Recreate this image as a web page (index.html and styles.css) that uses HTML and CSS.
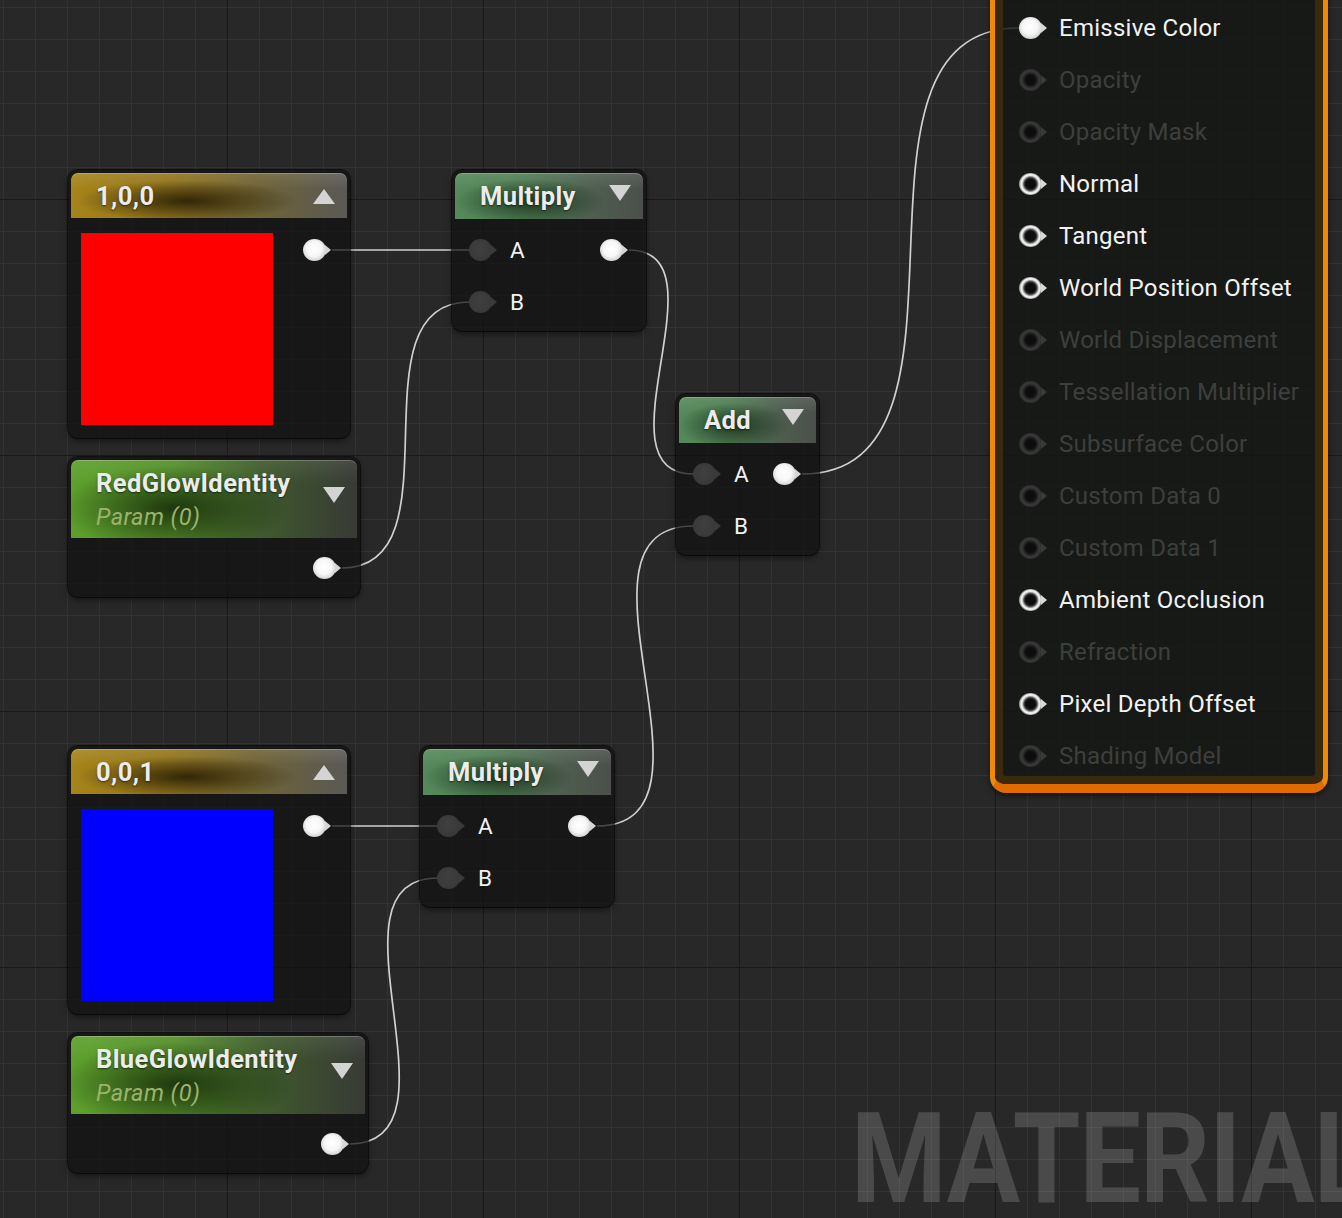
FILE: index.html
```html
<!DOCTYPE html>
<html lang="en">
<head>
<meta charset="utf-8">
<title>Material Graph</title>
<link rel="stylesheet" href="styles.css">
</head>
<body>
<div class="graph">
  <div class="watermark">MATERIAL</div>

  <svg class="wires" width="1342" height="1218" viewBox="0 0 1342 1218">
    <path d="M332 250 H469"/>
    <path d="M342 568 C462 568 349 302 469 302"/>
    <path d="M629 250 C729 250 593 474 693 474"/>
    <path d="M802 474 C1002 474 819 28 1019 28"/>
    <path d="M332 826 H437"/>
    <path d="M597 826 C737 826 553 526 693 526"/>
    <path d="M350 1144 C470 1144 317 878 437 878"/>
  </svg>

  <div class="node const n-red">
    <div class="hdr hdr-const"><span class="title">1,0,0</span><span class="tri up"></span></div>
    <div class="const-body"><div class="swatch swatch-red"></div><span class="pin out"></span></div>
  </div>

  <div class="node param n-redparam">
    <div class="hdr hdr-param">
      <div class="titles"><div class="title">RedGlowIdentity</div><div class="sub">Param (0)</div></div>
      <span class="tri down"></span>
    </div>
    <div class="param-body"><span class="pin out"></span></div>
  </div>

  <div class="node math n-mul1">
    <div class="hdr hdr-math"><span class="title">Multiply</span><span class="tri down"></span></div>
    <div class="math-body">
      <div class="row"><span class="pin in"></span><span class="lbl">A</span><span class="pin out"></span></div>
      <div class="row"><span class="pin in"></span><span class="lbl">B</span></div>
    </div>
  </div>

  <div class="node math n-add">
    <div class="hdr hdr-math"><span class="title">Add</span><span class="tri down"></span></div>
    <div class="math-body">
      <div class="row"><span class="pin in"></span><span class="lbl">A</span><span class="pin out"></span></div>
      <div class="row"><span class="pin in"></span><span class="lbl">B</span></div>
    </div>
  </div>

  <div class="node const n-blue">
    <div class="hdr hdr-const"><span class="title">0,0,1</span><span class="tri up"></span></div>
    <div class="const-body"><div class="swatch swatch-blue"></div><span class="pin out"></span></div>
  </div>

  <div class="node math n-mul2">
    <div class="hdr hdr-math"><span class="title">Multiply</span><span class="tri down"></span></div>
    <div class="math-body">
      <div class="row"><span class="pin in"></span><span class="lbl">A</span><span class="pin out"></span></div>
      <div class="row"><span class="pin in"></span><span class="lbl">B</span></div>
    </div>
  </div>

  <div class="node param n-blueparam">
    <div class="hdr hdr-param">
      <div class="titles"><div class="title">BlueGlowIdentity</div><div class="sub">Param (0)</div></div>
      <span class="tri down"></span>
    </div>
    <div class="param-body"><span class="pin out"></span></div>
  </div>

  <div class="mat">
    <div class="mat-body">
      <div class="mrow on"><span class="mpin filled"></span><span class="mlbl">Emissive Color</span></div>
      <div class="mrow off"><span class="mpin"></span><span class="mlbl">Opacity</span></div>
      <div class="mrow off"><span class="mpin"></span><span class="mlbl">Opacity Mask</span></div>
      <div class="mrow on"><span class="mpin"></span><span class="mlbl">Normal</span></div>
      <div class="mrow on"><span class="mpin"></span><span class="mlbl">Tangent</span></div>
      <div class="mrow on"><span class="mpin"></span><span class="mlbl">World Position Offset</span></div>
      <div class="mrow off"><span class="mpin"></span><span class="mlbl">World Displacement</span></div>
      <div class="mrow off"><span class="mpin"></span><span class="mlbl">Tessellation Multiplier</span></div>
      <div class="mrow off"><span class="mpin"></span><span class="mlbl">Subsurface Color</span></div>
      <div class="mrow off"><span class="mpin"></span><span class="mlbl">Custom Data 0</span></div>
      <div class="mrow off"><span class="mpin"></span><span class="mlbl">Custom Data 1</span></div>
      <div class="mrow on"><span class="mpin"></span><span class="mlbl">Ambient Occlusion</span></div>
      <div class="mrow off"><span class="mpin"></span><span class="mlbl">Refraction</span></div>
      <div class="mrow on"><span class="mpin"></span><span class="mlbl">Pixel Depth Offset</span></div>
      <div class="mrow off"><span class="mpin"></span><span class="mlbl">Shading Model</span></div>
    </div>
  </div>
</div>
</body>
</html>
```

FILE: styles.css
```css
* { box-sizing: border-box; }

html, body {
  margin: 0;
  padding: 0;
  background: #282828;
}

body {
  font-family: Roboto, "Noto Sans", "Liberation Sans", sans-serif;
  color: #eeeeee;
}

.graph {
  position: relative;
  width: 1342px;
  height: 1218px;
  overflow: hidden;
  background-color: #282828;
  background-image:
    linear-gradient(to right, #191919 1px, transparent 1px),
    linear-gradient(to bottom, #191919 1px, transparent 1px),
    linear-gradient(to right, #333333 1px, transparent 1px),
    linear-gradient(to bottom, #333333 1px, transparent 1px);
  background-size: 256px 256px, 256px 256px, 32px 32px, 32px 32px;
  background-position: 227px 199px, 227px 199px, 3px 7px, 3px 7px;
}

/* watermark */
.watermark {
  position: absolute;
  left: 851px;
  top: 1095px;
  font-family: Roboto, "Liberation Sans", sans-serif;
  font-weight: 700;
  font-size: 127px;
  line-height: 127px;
  color: rgba(255, 255, 255, 0.16);
  white-space: nowrap;
  letter-spacing: -1px;
  transform: scaleX(0.86);
  transform-origin: 0 0;
}

/* wires */
.wires {
  position: absolute;
  left: 0;
  top: 0;
}
.wires path {
  fill: none;
  stroke: #d0d0d0;
  stroke-width: 1.7;
}

/* nodes */
.node {
  position: absolute;
  padding: 3px;
  border-radius: 10px;
  background: rgba(16, 17, 16, 0.72);
  box-shadow: 0 0 0 1px rgba(0, 0, 0, 0.55), 0 3px 6px rgba(0, 0, 0, 0.5);
}

.n-red       { left: 68px;  top: 170px;  width: 282px; }
.n-redparam  { left: 68px;  top: 457px;  width: 292px; }
.n-mul1      { left: 452px; top: 170px;  width: 194px; }
.n-add       { left: 676px; top: 394px;  width: 143px; }
.n-blue      { left: 68px;  top: 746px;  width: 282px; }
.n-mul2      { left: 420px; top: 746px;  width: 194px; }
.n-blueparam { left: 68px;  top: 1033px; width: 300px; }

.hdr {
  display: flex;
  align-items: center;
  height: 46px;
  padding: 0 12px 0 25px;
  border-radius: 7px 7px 0 0;
  box-shadow: inset 0 1px 0 rgba(255, 255, 255, 0.22);
}
.hdr-const {
  height: 45px;
  background:
    linear-gradient(to bottom, rgba(255, 255, 255, 0.10), rgba(255, 255, 255, 0) 35%),
    radial-gradient(ellipse 40% 46% at 42% 62%, rgba(40, 30, 4, 0.9), rgba(40, 30, 4, 0) 100%),
    linear-gradient(to right, #a6841a 0%, #93751c 35%, #6e6336 68%, #5a5956 100%);
}
.hdr-math {
  background:
    linear-gradient(to bottom, rgba(255, 255, 255, 0.10), rgba(255, 255, 255, 0) 35%),
    radial-gradient(ellipse 40% 50% at 40% 62%, rgba(20, 40, 22, 0.8), rgba(20, 40, 22, 0) 100%),
    linear-gradient(to right, #55895a 0%, #4f7f53 35%, #4e604f 70%, #4c4f4c 100%);
}
.hdr-param {
  height: 78px;
  align-items: flex-start;
  background:
    linear-gradient(to bottom, rgba(255, 255, 255, 0.08), rgba(255, 255, 255, 0) 30%),
    radial-gradient(ellipse 40% 55% at 36% 62%, rgba(22, 40, 10, 0.85), rgba(22, 40, 10, 0) 100%),
    linear-gradient(to right, #5ea02c 0%, #53902a 35%, #3f5a2c 66%, #383a36 100%);
}

.title {
  flex: 1;
  font-weight: 700;
  font-size: 25.5px;
  line-height: 30px;
  letter-spacing: 0.4px;
  color: #ececec;
  white-space: nowrap;
  text-shadow: 0 1px 2px rgba(0, 0, 0, 0.55);
}
.titles {
  flex: 1;
  padding-top: 8px;
}
.sub {
  margin-top: 6px;
  font-style: italic;
  font-size: 23.5px;
  line-height: 26px;
  letter-spacing: 0.4px;
  color: #9bb46a;
}

.tri {
  width: 0;
  height: 0;
  border-left: 11px solid transparent;
  border-right: 11px solid transparent;
  flex: none;
}
.tri.up {
  border-bottom: 15px solid #d4d4d4;
  margin-top: 2px;
}
.tri.down {
  border-top: 16px solid #d4d4d4;
  margin-top: -6px;
}
.hdr-param .tri.down {
  margin-top: 27px;
}

/* const node */
.const-body {
  display: flex;
  align-items: flex-start;
  padding: 15px 15px 10px 10px;
}
.swatch {
  width: 192px;
  height: 192px;
}
.swatch-red { background: #ff0000; }
.swatch-blue { background: #0000ff; }
.const-body .pin {
  margin-left: auto;
  margin-top: 6px;
}

/* param body */
.param-body {
  display: flex;
  justify-content: flex-end;
  padding: 19px 15px 15px;
}

/* math body */
.math-body {
  padding: 5px 14px 0 14px;
}
.row {
  display: flex;
  align-items: center;
  height: 52px;
}
.row .pin.out {
  margin-left: auto;
}
.lbl {
  margin-left: 12px;
  font-size: 22.5px;
  line-height: 26px;
  color: #f2f2f2;
}

/* pins */
.pin {
  position: relative;
  flex: none;
  width: 29px;
  height: 22px;
}
.pin::before {
  content: "";
  position: absolute;
  left: 0;
  top: 0;
  width: 23px;
  height: 22px;
  border-radius: 50%;
}
.pin::after {
  content: "";
  position: absolute;
  left: 22px;
  top: 6px;
  border-left: 6px solid #d6d6d6;
  border-top: 5px solid transparent;
  border-bottom: 5px solid transparent;
}
.pin.out::before {
  background: radial-gradient(circle at 48% 45%, #ffffff 0, #f6f6f6 45%, #d2d2d2 72%, #9c9c9c 100%);
}
.pin.in::before {
  background: radial-gradient(circle at 48% 45%, #404040 0, #3a3a3a 60%, #323232 100%);
}
.pin.in::after {
  border-left-color: #3a3a3a;
}

/* material output node */
.mat {
  position: absolute;
  left: 990px;
  top: -40px;
  width: 338px;
  height: 833px;
  border: 5px solid #ef8a07;
  border-bottom: 9px solid #e06c00;
  border-radius: 16px;
  box-shadow: 0 3px 6px rgba(0, 0, 0, 0.5);
}
.mat-body {
  height: 100%;
  padding: 29px 0 0 16px;
  border: 8px solid #39290f;
  border-radius: 10px;
  background: rgba(20, 22, 20, 0.82);
  background-clip: padding-box;
}
.mrow {
  display: flex;
  align-items: center;
  height: 52px;
}
.mlbl {
  margin-left: 11px;
  font-size: 24px;
  line-height: 28px;
  letter-spacing: 0.25px;
  white-space: nowrap;
}
.mrow.on .mlbl { color: #f2f2f2; }
.mrow.off .mlbl { color: #3d3f3d; }

.mpin {
  position: relative;
  flex: none;
  width: 29px;
  height: 22px;
}
.mpin::before {
  content: "";
  position: absolute;
  left: 0;
  top: 0;
  width: 23px;
  height: 22px;
  border-radius: 50%;
}
.mpin::after {
  content: "";
  position: absolute;
  left: 22px;
  top: 6px;
  border-left: 6px solid #3a3a3a;
  border-top: 5px solid transparent;
  border-bottom: 5px solid transparent;
}
.mrow.off .mpin::before {
  background: radial-gradient(circle, #0c0c0c 0, #0e0e0e 5px, #262626 7px, #3a3a3a 9px, #2c2c2c 11px);
}
.mrow.on .mpin::before {
  background: radial-gradient(circle, #0c0c0c 0, #0e0e0e 5px, #4a4a4a 6.5px, #e6e6e6 8.5px, #f4f4f4 9.5px, #9a9a9a 11px);
}
.mrow.on .mpin::after {
  border-left-color: #d8d8d8;
}
.mrow.on .mpin.filled::before {
  background: radial-gradient(circle at 48% 45%, #ffffff 0, #f6f6f6 45%, #d2d2d2 72%, #9c9c9c 100%);
}
```
